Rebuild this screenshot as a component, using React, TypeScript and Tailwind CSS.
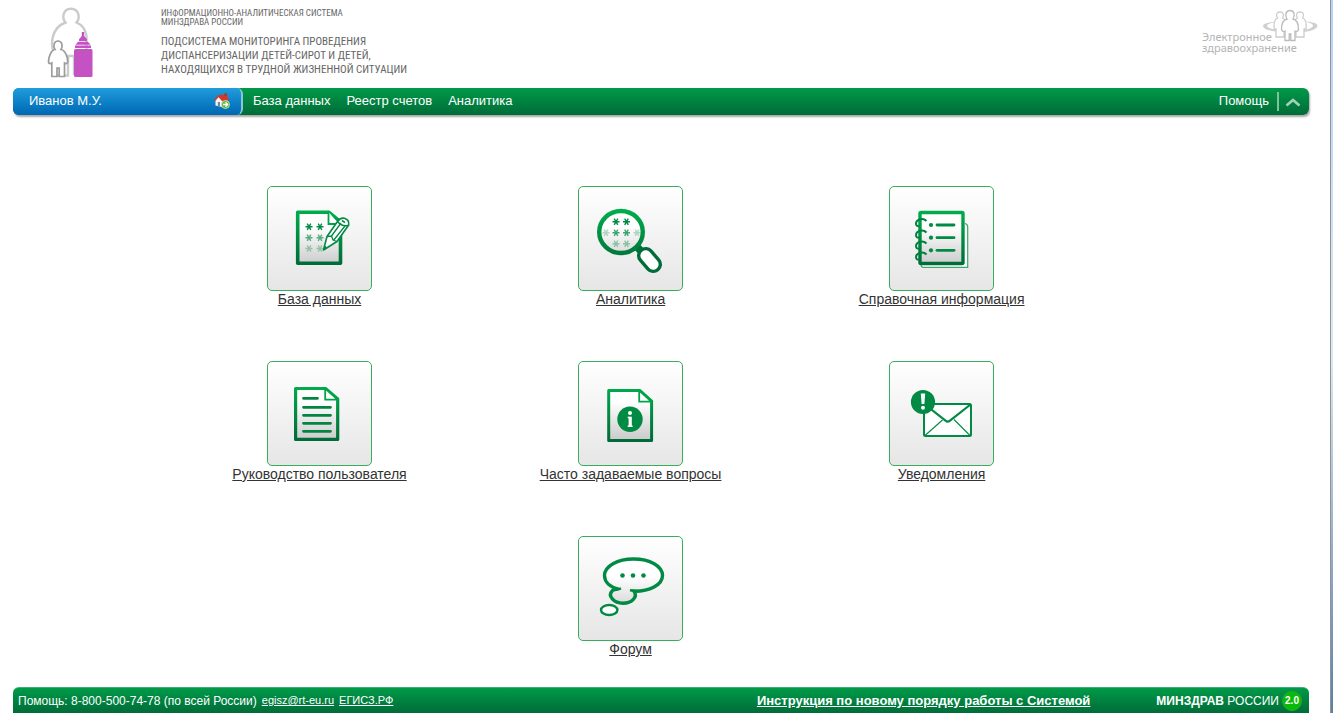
import type { ReactNode } from "react";

type Tile = {
  title: string;
  icon: ReactNode;
};

// звёздочка, из которых состоят "данные" на иконках
const Star = ({ x, y, opacity = 1 }: { x: number; y: number; opacity?: number }) => (
  <path
    d={`M${x - 3.5} ${y}h7M${x - 1.8} ${y - 3.1}l3.6 6.2M${x + 1.8} ${y - 3.1}l-3.6 6.2`}
    stroke="#008a43"
    strokeWidth="1.4"
    opacity={opacity}
  />
);

const Defs = () => (
  <svg width="0" height="0" className="absolute" aria-hidden="true">
    <defs>
      <linearGradient id="green" gradientUnits="userSpaceOnUse" x1="0" y1="24" x2="0" y2="82">
        <stop offset="0" stopColor="#00ae4b" />
        <stop offset="1" stopColor="#006838" />
      </linearGradient>
      <linearGradient id="paper" gradientUnits="userSpaceOnUse" x1="0" y1="24" x2="0" y2="80">
        <stop offset="0.3" stopColor="#ffffff" />
        <stop offset="1" stopColor="#c9c9c9" />
      </linearGradient>
    </defs>
  </svg>
);

const Icon = ({ children }: { children: ReactNode }) => (
  <svg viewBox="0 0 105 105" className="size-[105px] shrink-0" fill="none" aria-hidden="true">
    {children}
  </svg>
);

const DatabaseIcon = () => (
  <Icon>
    <path d="M30.7 26.3H62L73.5 36V77.3H30.7Z" fill="url(#paper)" stroke="url(#green)" strokeWidth="3.6" strokeLinejoin="round" />
    <path d="M61.5 26V38H72" stroke="#00a349" strokeWidth="1.8" fill="#fff" />
    <Star x={42} y={40.7} />
    <Star x={53} y={40.7} />
    <Star x={42} y={51.7} opacity={0.65} />
    <Star x={53} y={51.7} opacity={0.65} />
    <Star x={42} y={62.5} opacity={0.35} />
    <Star x={53} y={62.5} opacity={0.35} />
    <path d="M56.5 64L60 50.5L70.5 35.5Q73 31.5 77.5 32.3Q82.5 34 81.7 39L70 55.5Z" fill="#fff" stroke="#008a43" strokeWidth="1.6" strokeLinejoin="round" />
    <path d="M60 50.5L64.5 50L66 54L70 55.5M64.5 50L74 37M66.8 54L78 40" stroke="#008a43" strokeWidth="1.3" />
    <path d="M70.5 35.5Q75 41 81 39.5" stroke="#008a43" strokeWidth="1.5" />
    <ellipse cx="76.5" cy="35.5" rx="2" ry="1" transform="rotate(30 76.5 35.5)" fill="#008a43" />
    <path d="M56.5 64L57.8 59.5L60 61.2Z" fill="#008a43" />
  </Icon>
);

const AnalyticsIcon = () => (
  <Icon>
    <path d="M58 60L67 69" stroke="#00733b" strokeWidth="7.5" />
    <ellipse cx="43" cy="46" rx="21.8" ry="21" fill="url(#paper)" stroke="url(#green)" strokeWidth="4.4" />
    <Star x={38} y={35.7} />
    <Star x={48.5} y={35.7} />
    <Star x={28} y={46.7} opacity={0.3} />
    <Star x={38} y={46.7} opacity={0.75} />
    <Star x={48.5} y={46.7} opacity={0.75} />
    <Star x={59} y={46.7} opacity={0.3} />
    <Star x={38} y={57.7} opacity={0.4} />
    <Star x={48.5} y={57.7} opacity={0.4} />
    <rect x="58.8" y="67" width="25.4" height="14" rx="6.8" transform="rotate(49 71.5 74)" fill="#fff" stroke="#006c39" strokeWidth="3.4" />
  </Icon>
);

const ReferenceIcon = () => (
  <Icon>
    <path d="M76 37.5Q78.7 38 78.7 41V81.3H34Q32 81 32 78" stroke="#3fa66c" strokeWidth="1.2" fill="#fff" />
    <rect x="31" y="26.5" width="43" height="51" rx="1" fill="url(#paper)" stroke="url(#green)" strokeWidth="3.4" />
    {[36.5, 48, 59, 70].map((y) => (
      <path key={y} d={`M37.5 ${y - 1.5}Q35 ${y - 4} 31.5 ${y - 3.2}Q27 ${y - 2} 27 ${y + 1}Q27 ${y + 4} 30.5 ${y + 3.8}`} stroke="#00813f" strokeWidth="2" />
    ))}
    {[39, 51.7, 64.3].map((y) => (
      <g key={y}>
        <circle cx="42" cy={y} r="2.1" fill="#008a43" />
        <path d={`M48 ${y}H65`} stroke="#008a43" strokeWidth="2.8" strokeLinecap="round" />
      </g>
    ))}
  </Icon>
);

const ManualIcon = () => (
  <Icon>
    <path d="M28.6 27.5H58.5L70.7 38V78.4H28.6Z" fill="url(#paper)" stroke="url(#green)" strokeWidth="3.2" strokeLinejoin="round" />
    <path d="M58.2 27.5V38.7H70.5Z" stroke="#00a349" strokeWidth="1.8" fill="#fff" strokeLinejoin="round" />
    <path
      d="M36.5 37.3H50.5M36.5 46.3H63.5M36.5 54.3H63.5M36.5 62.3H63.5M36.5 70.3H63.5"
      stroke="#008542"
      strokeWidth="2.8"
      strokeLinecap="round"
    />
  </Icon>
);

const FaqIcon = () => (
  <Icon>
    <path d="M30.7 29.5H62L73.6 40V79.5H30.7Z" fill="url(#paper)" stroke="url(#green)" strokeWidth="3" strokeLinejoin="round" />
    <path d="M61.2 29.5V40.7H73.3Z" stroke="#00a349" strokeWidth="1.8" fill="#fff" strokeLinejoin="round" />
    <circle cx="52" cy="58.3" r="12.7" fill="#008a43" />
    <circle cx="52" cy="52" r="2" fill="#fff" />
    <path d="M49.7 56.5H52M49.7 65.3H54.6" stroke="#fff" strokeWidth="1.6" />
    <path d="M52.2 55.7V66" stroke="#fff" strokeWidth="3.2" />
  </Icon>
);

const NoticeIcon = () => (
  <Icon>
    <rect x="35" y="43" width="47" height="32" rx="1.5" fill="#fff" stroke="#008a43" strokeWidth="2" />
    <path d="M36 74.5L53.5 59M81 74.5L65 58.5" stroke="#008a43" strokeWidth="1.1" />
    <path d="M36 43.5L56.5 59.7Q58.7 61.5 61 59.7L81.5 43.5" stroke="#008a43" strokeWidth="2.2" />
    <circle cx="34" cy="41" r="12.1" fill="#008a43" />
    <path d="M31.8 32.5H36.2L35.4 43H32.6Z" fill="#fff" />
    <circle cx="34" cy="46.7" r="2" fill="#fff" />
  </Icon>
);

const ForumIcon = () => (
  <Icon>
    <path
      d="M40.5 53.2C32 51 26.5 46 26.5 39.5C26.5 30 39.5 23 55.5 23C72 23 84.5 30 84.5 39.5C84.5 49 71.5 55.5 56 55.3C60 61 54 67.3 45 67.3C36 67.3 29 60 34.5 54.5Q37 52.5 40.5 53.2Z"
      fill="url(#paper)"
      stroke="#008a43"
      strokeWidth="3.4"
    />
    <path d="M36 54.3L43 52.5" stroke="#008a43" strokeWidth="2.4" />
    <path d="M52 54.3L60 55.3" stroke="#008a43" strokeWidth="2.6" />
    <ellipse cx="31.2" cy="74" rx="8.2" ry="5" fill="#fff" stroke="#008a43" strokeWidth="2.4" />
    <circle cx="44.5" cy="39.5" r="2.3" fill="#008a43" />
    <circle cx="55" cy="39.5" r="2.3" fill="#008a43" />
    <circle cx="65.5" cy="39.5" r="2.3" fill="#008a43" />
  </Icon>
);

const ChildrenLogo = () => (
  <svg viewBox="0 0 50 72" className="h-[72px] w-[50px]" fill="none" aria-hidden="true">
    <path
      d="M18.5 16.5C14.5 12 16 2.7 24 2.7S33.5 12 29.5 16.5C36 19 38.5 24 39.5 30V68H27V50H21V69.5H9V50C2.5 42 3 22 18.5 16.5Z"
      stroke="#cbcbcb"
      strokeWidth="2.4"
    />
    <path
      d="M8 43.5C5.8 40 7 35 11 35S16.2 40 14 43.5C18 44 21 51 20.7 56Q20 58.5 17.5 57V70.5H12.2V62H10V70.5H4.8V57Q2 58.5 1.5 56C1.5 51 4 44 8 43.5Z"
      fill="#fff"
      stroke="#9c9c9c"
      strokeWidth="1.7"
    />
    <path d="M34.8 26H37.2V30L40 33.3V35H32V33.3L34.8 30Z" fill="#c552c2" />
    <path d="M31 35.8H41L43.5 38.8H28.5Z" fill="#c552c2" />
    <path d="M28 39.5H44V42H28Z" fill="#c552c2" />
    <rect x="27" y="43" width="18.5" height="28" rx="1.5" fill="#c552c2" />
  </svg>
);

const PeopleLogo = () => (
  <svg viewBox="0 0 56 34" className="h-[34px] w-14" fill="none" aria-hidden="true">
    <path d="M14 14C5 14 1 16 1 18C1 21 8 23 15 23.5L14 21.5C9 21 5 19.5 5 17.8C5 16 9 15 14 14Z" fill="#d0d0d0" />
    <path d="M42 13C50 14 55.5 15 55.5 17.5C55.5 21 48 23.5 41 24L42 22C47 21 51 19.5 51 17.5C51 15.5 46 14.5 42 13Z" fill="#d0d0d0" />
    <g stroke="#cdcdcd" strokeWidth="1.3" fill="#fff">
      <path d="M15.5 10C13.5 7 14.5 4 18 4S22.5 7 20.5 10C24 11 24 16 23 21H22V29H14V21Q12 22 12 19C12 15 12.5 11 15.5 10Z" />
      <path d="M35.5 10C33.5 7 34.5 4 38 4S42.5 7 40.5 10C44 11 44.5 16 44 21H42V29H34V21Q32 22 32 19C32 15 32.5 11 35.5 10Z" />
      <path stroke="#bbbbbb" d="M25 11C22.5 7 24 2.5 28 2.5S33.5 7 31 11C35.5 12 36.5 17 36.5 21.5Q36 24 33 23V32.5H28.8V26H27.2V32.5H23V23Q20 24 19.5 21.5C19.5 17 20.5 12 25 11Z" />
    </g>
  </svg>
);

const HomeIcon = () => (
  <svg viewBox="0 0 16 16" className="size-4" aria-hidden="true">
    <path d="M1.5 7.5L4.5 4L8 7.5V14L1.5 12.5Z" fill="#f7f7f7" />
    <path d="M8 7.5H14V13H8Z" fill="#d4dce2" />
    <path d="M3.8 9H6V13.5L3.8 13Z" fill="#7b8794" />
    <path d="M4.5 2L12 1.5L15.5 7L8.5 8.5L4.5 4L1 8L0 7Z" fill="#d8372c" />
    <path d="M10.5 0.3H13V3H10.5Z" fill="#a33a2a" />
    <circle cx="11.5" cy="11.5" r="4" fill="#5fb53a" stroke="#cfeabc" strokeWidth="0.8" />
    <path d="M9 11.5H13M11.5 9.3L13.7 11.5L11.5 13.7" stroke="#fff" strokeWidth="1.3" fill="none" />
  </svg>
);

const menu = ["База данных", "Реестр счетов", "Аналитика"];

const tiles: Tile[] = [
  { title: "База данных", icon: <DatabaseIcon /> },
  { title: "Аналитика", icon: <AnalyticsIcon /> },
  { title: "Справочная информация", icon: <ReferenceIcon /> },
  { title: "Руководство пользователя", icon: <ManualIcon /> },
  { title: "Часто задаваемые вопросы", icon: <FaqIcon /> },
  { title: "Уведомления", icon: <NoticeIcon /> },
  { title: "Форум", icon: <ForumIcon /> },
];

const Header = () => (
  <header className="flex h-[88px] items-start pl-[47px] pr-3">
    <div className="pt-[6px]">
      <ChildrenLogo />
    </div>
    <div className="ml-16 pt-[9px] font-['Roboto_Condensed','Open_Sans_Condensed','Noto_Sans_Condensed','Roboto',sans-serif] text-[#666]">
      <p className="text-[9px] leading-[9px]">
        ИНФОРМАЦИОННО-АНАЛИТИЧЕСКАЯ СИСТЕМА
        <br />
        МИНЗДРАВА РОССИИ
      </p>
      <h1 className="mt-2 text-[11px] leading-[14px]">
        ПОДСИСТЕМА МОНИТОРИНГА ПРОВЕДЕНИЯ
        <br />
        ДИСПАНСЕРИЗАЦИИ ДЕТЕЙ-СИРОТ И ДЕТЕЙ,
        <br />
        НАХОДЯЩИХСЯ В ТРУДНОЙ ЖИЗНЕННОЙ СИТУАЦИИ
      </h1>
    </div>
    <div className="relative ml-auto h-[60px] w-[116px]">
      <p className="pt-[31px] font-['Noto_Sans',sans-serif] text-[11px] leading-[11px] text-[#b4b4b4]">
        Электронное
        <br />
        здравоохранение
      </p>
      <div className="absolute right-0 top-2">
        <PeopleLogo />
      </div>
    </div>
  </header>
);

const NavBar = () => (
  <nav className="flex h-[27px] items-stretch rounded-md bg-linear-to-b from-[#009a48] to-[#006c38] text-[13px] text-white shadow-[1px_2px_2px_#a8a8a8]">
    <div className="flex w-[230px] items-center justify-between rounded-md border-r-2 border-[#8fc3d8] bg-linear-to-b from-[#1f9ddc] to-[#0067b3] pb-[2px] pl-4 pr-[11px]">
      <span>Иванов М.У.</span>
      <a href="#home" aria-label="На главную">
        <HomeIcon />
      </a>
    </div>
    <ul className="flex items-center gap-4 pb-[2px] pl-[10px]">
      {menu.map((item) => (
        <li key={item}>
          <a href="#menu">{item}</a>
        </li>
      ))}
    </ul>
    <div className="ml-auto flex items-center pr-2">
      <a href="#help" className="pb-[2px]">Помощь</a>
      <span className="ml-2 h-[19px] w-[2px] bg-[#7fc39d]" />
      <button type="button" aria-label="Свернуть" className="ml-[6px]">
        <svg viewBox="0 0 16 10" className="h-[10px] w-4" fill="none">
          <path d="M1.5 8.5L8 3L14.5 8.5" stroke="#a3d3b7" strokeWidth="2.6" />
        </svg>
      </button>
    </div>
  </nav>
);

const Footer = () => (
  <footer className="mt-auto flex h-[26px] items-center rounded-t-md border-t border-[#3fae70] bg-linear-to-b from-[#009a48] to-[#006c38] pl-[5px] pr-[7px] text-white">
    <p className="text-[12px]">
      Помощь: 8-800-500-74-78 (по всей России)
    </p>
    <a href="#mail" className="ml-[5px] text-[11px] underline">egisz@rt-eu.ru</a>
    <a href="#egisz" className="ml-[5px] text-[11px] underline">ЕГИСЗ.РФ</a>
    <a href="#manual" className="ml-auto text-[13px] font-bold underline">
      Инструкция по новому порядку работы с Системой
    </a>
    <div className="ml-[66px] flex items-center gap-[3px] text-[12px]">
      <span>
        <b>МИНЗДРАВ</b> РОССИИ
      </span>
      <span className="flex size-5 items-center justify-center rounded-full border border-[#2fa52f] bg-[#08bb08] text-[10px] font-bold">
        2.0
      </span>
    </div>
  </footer>
);

const App = () => {
  return (
    <div className="flex min-h-screen bg-white font-['Liberation_Sans',Arial,sans-serif]">
      <Defs />
      <div className="flex min-w-0 flex-1 flex-col">
        <Header />
        <div className="flex flex-1 flex-col pl-[13px] pr-[21px]">
          <NavBar />
          <main className="ml-[151px] mt-[71px] flex w-[72%] flex-wrap justify-center gap-y-[54px]">
            {tiles.map((tile) => (
              <a key={tile.title} href="#section" className="flex w-1/3 flex-col items-center">
                <span className="flex size-[105px] items-center justify-center rounded-[5px] border border-[#37ae5e] bg-linear-to-b from-white to-[#e6e6e6]">
                  {tile.icon}
                </span>
                <span className="whitespace-nowrap text-[14px] leading-[16px] text-[#333] underline">
                  {tile.title}
                </span>
              </a>
            ))}
          </main>
          <Footer />
        </div>
      </div>
      <div className="w-[3px] border-l border-[#8a95a5] bg-linear-to-b from-[#b8d3f0] via-[#dfe8ee] to-[#5f7f9f]" />
    </div>
  );
};

export default App;
